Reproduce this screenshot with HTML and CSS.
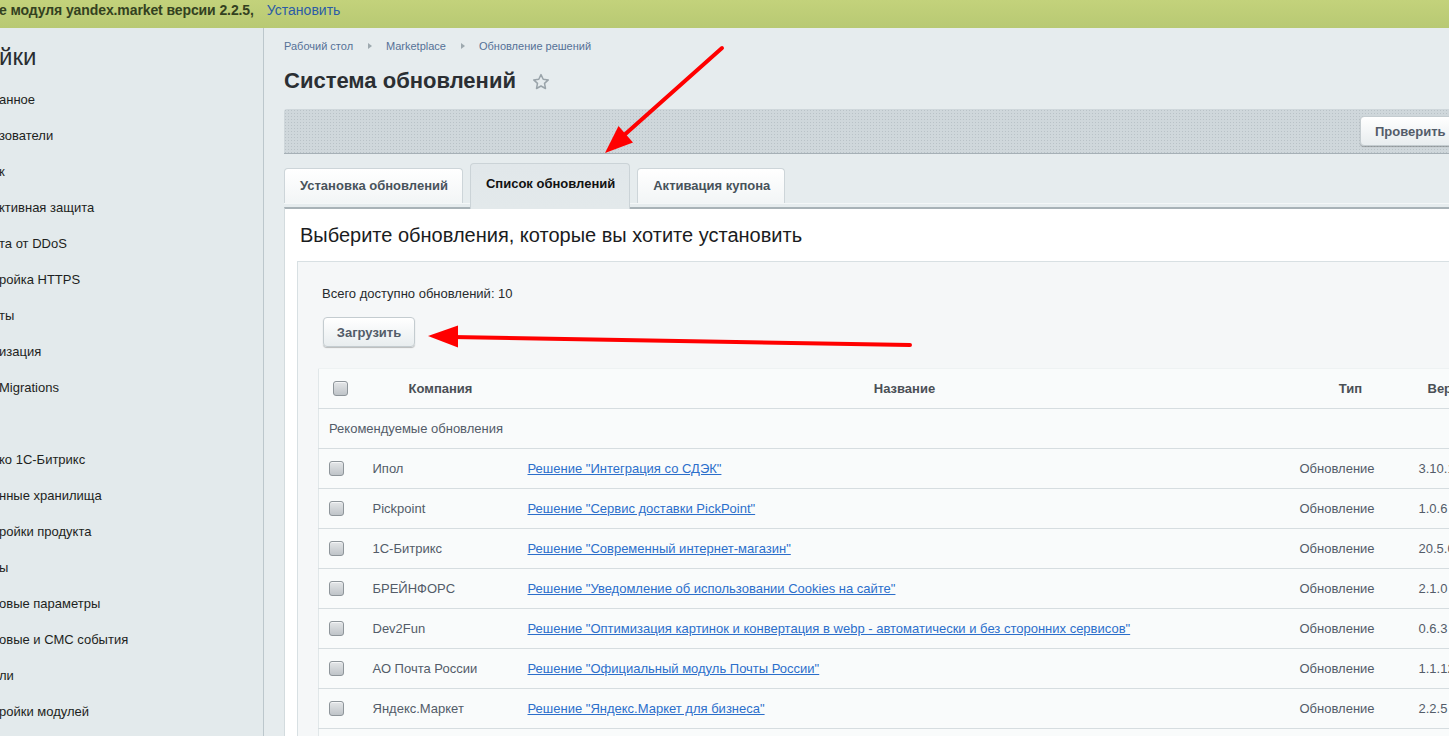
FILE: index.html
```html
<!DOCTYPE html>
<html lang="ru">
<head>
<meta charset="utf-8">
<title>Система обновлений</title>
<link rel="stylesheet" href="styles.css">
</head>
<body>
<div class="topbar">
  <span class="topbar-text">е модуля yandex.market версии 2.2.5,</span>
  <a class="topbar-link" href="#">Установить</a>
</div>
<div class="layout">
  <aside class="sidebar">
    <div class="side-title">йки</div>
    <ul class="side-list">
      <li>анное</li>
      <li>зователи</li>
      <li>к</li>
      <li>ктивная защита</li>
      <li>та от DDoS</li>
      <li>ройка HTTPS</li>
      <li>ты</li>
      <li>изация</li>
      <li>Migrations</li>
      <li></li>
      <li>ко 1С-Битрикс</li>
      <li>нные хранилища</li>
      <li>ройки продукта</li>
      <li>ы</li>
      <li>овые параметры</li>
      <li>овые и СМС события</li>
      <li>ли</li>
      <li>ройки модулей</li>
    </ul>
  </aside>
  <main class="main">
    <nav class="crumbs">
      <a href="#">Рабочий стол</a><span class="crumb-sep"></span>
      <a href="#">Marketplace</a><span class="crumb-sep"></span>
      <a href="#">Обновление решений</a>
    </nav>
    <h1 class="page-title">Система обновлений
      <svg class="star" width="18" height="18" viewBox="0 0 18 18"><path d="M9 1.6l2.2 4.7 5.1.6-3.8 3.5 1 5.1L9 13l-4.5 2.5 1-5.1L1.7 6.9l5.1-.6z" fill="none" stroke="#9aa4aa" stroke-width="1.5" stroke-linejoin="round"/></svg>
    </h1>
    <div class="toolbar">
      <button class="btn btn-check">Проверить</button>
    </div>
    <div class="tabs">
      <div class="tab">Установка обновлений</div>
      <div class="tab tab-active">Список обновлений</div>
      <div class="tab">Активация купона</div>
    </div>
    <section class="panel">
      <h2 class="panel-title">Выберите обновления, которые вы хотите установить</h2>
      <div class="inner">
        <div class="total">Всего доступно обновлений: 10</div>
        <button class="btn btn-load">Загрузить</button>
        <table class="grid">
          <colgroup>
            <col class="c-check"><col class="c-company"><col class="c-name"><col class="c-type"><col class="c-ver"><col class="c-rest">
          </colgroup>
          <thead>
            <tr>
              <th class="th-check"><span class="cb"></span></th>
              <th>Компания</th>
              <th>Название</th>
              <th>Тип</th>
              <th class="th-left">Версия</th>
              <th></th>
            </tr>
          </thead>
          <tbody>
            <tr class="group"><td colspan="6">Рекомендуемые обновления</td></tr>
            <tr><td><span class="cb"></span></td><td>Ипол</td><td><a href="#">Решение "Интеграция со СДЭК"</a></td><td>Обновление</td><td>3.10.1</td><td></td></tr>
            <tr><td><span class="cb"></span></td><td>Pickpoint</td><td><a href="#">Решение "Сервис доставки PickPoint"</a></td><td>Обновление</td><td>1.0.6</td><td></td></tr>
            <tr><td><span class="cb"></span></td><td>1С-Битрикс</td><td><a href="#">Решение "Современный интернет-магазин"</a></td><td>Обновление</td><td>20.5.0</td><td></td></tr>
            <tr><td><span class="cb"></span></td><td>БРЕЙНФОРС</td><td><a href="#">Решение "Уведомление об использовании Cookies на сайте"</a></td><td>Обновление</td><td>2.1.0</td><td></td></tr>
            <tr><td><span class="cb"></span></td><td>Dev2Fun</td><td><a href="#">Решение "Оптимизация картинок и конвертация в webp - автоматически и без сторонних сервисов"</a></td><td>Обновление</td><td>0.6.3</td><td></td></tr>
            <tr><td><span class="cb"></span></td><td>АО Почта России</td><td><a href="#">Решение "Официальный модуль Почты России"</a></td><td>Обновление</td><td>1.1.12</td><td></td></tr>
            <tr><td><span class="cb"></span></td><td>Яндекс.Маркет</td><td><a href="#">Решение "Яндекс.Маркет для бизнеса"</a></td><td>Обновление</td><td>2.2.5</td><td></td></tr>
            <tr><td><span class="cb"></span></td><td>Яндекс.Маркет</td><td><a href="#">Решение "Яндекс.Маркет"</a></td><td>Обновление</td><td>2.2.5</td><td></td></tr>
          </tbody>
        </table>
      </div>
    </section>
  </main>
</div>
<svg class="annot" width="1449" height="736" viewBox="0 0 1449 736">
  <line x1="722" y1="48" x2="622" y2="137" stroke="#ff0000" stroke-width="4" stroke-linecap="round"/>
  <polygon points="605,153 618.5,126 633,142.5" fill="#ff0000"/>
  <line x1="910" y1="345" x2="452" y2="337" stroke="#ff0000" stroke-width="4" stroke-linecap="round"/>
  <polygon points="428,336 458,325.5 458,347.5" fill="#ff0000"/>
</svg>
</body>
</html>
```

FILE: styles.css
```css
html, body {
  margin: 0;
  padding: 0;
  overflow: hidden;
  width: 1449px;
  height: 736px;
}
body {
  font-family: "Liberation Sans", Arial, sans-serif;
  font-size: 13px;
  color: #1f2326;
  background: #e5ebed;
  position: relative;
}
a { color: inherit; }

.topbar {
  height: 28px;
  box-sizing: border-box;
  background: linear-gradient(#c3d27b, #b8c973);
  display: flex;
  align-items: flex-start;
  white-space: nowrap;
  line-height: 20px;
  font-size: 14px;
}
.topbar-text {
  font-weight: bold;
  color: #33411f;
  margin-left: -1px;
  letter-spacing: -0.1px;
}
.topbar-link {
  color: #2b5ca6;
  text-decoration: none;
  margin-left: 13px;
}

.layout {
  display: flex;
  width: 1580px;
  height: 708px;
}
.sidebar {
  width: 263px;
  flex: none;
  border-right: 1px solid #bcc7cc;
  background: #e3eaec;
  padding-top: 15px;
  overflow: hidden;
  white-space: nowrap;
}
.side-title {
  font-size: 24px;
  line-height: 28px;
  color: #2a2d30;
  margin: 0 0 11px -1px;
}
.side-list {
  list-style: none;
  margin: 0;
  padding: 0;
}
.side-list li {
  height: 36px;
  line-height: 36px;
  font-size: 13px;
  color: #1d1f21;
  margin-left: -1px;
}

.main {
  flex: 1;
  padding: 10px 0 0 20px;
  min-width: 0;
  background: #e6ecee;
}
.crumbs {
  font-size: 11px;
  line-height: 16px;
  display: flex;
  align-items: center;
  white-space: nowrap;
}
.crumbs a {
  color: #557197;
  text-decoration: none;
}
.crumb-sep {
  width: 0;
  height: 0;
  border-left: 4px solid #9ea9af;
  border-top: 3px solid transparent;
  border-bottom: 3px solid transparent;
  margin: 0 14px 0 15px;
}
.page-title {
  font-size: 22px;
  line-height: 26px;
  font-weight: bold;
  color: #2b2f33;
  margin: 14px 0 0 0;
  display: flex;
  align-items: center;
}
.star {
  margin-left: 16px;
  margin-top: 2px;
}

.toolbar {
  margin-top: 15px;
  height: 44px;
  border-bottom: 1px solid #a6b0b6;
  border-radius: 3px 0 0 0;
  background-color: #cfd7db;
  background-image: radial-gradient(circle, #b9c2c7 0.7px, transparent 0.9px);
  background-size: 3px 3px;
  display: flex;
  align-items: center;
  padding-left: 1076px;
}
.btn {
  font-family: "Liberation Sans", Arial, sans-serif;
  font-weight: bold;
  font-size: 13px;
  color: #535c69;
  border: 1px solid #c4ccd0;
  border-radius: 4px;
  background: linear-gradient(#ffffff, #e8edef);
  box-shadow: 0 1px 1px rgba(0,0,0,0.25), inset 0 1px 0 #fff;
  cursor: pointer;
}
.btn-check {
  height: 30px;
  padding: 0 14px;
  white-space: nowrap;
}

.tabs {
  display: flex;
  align-items: flex-end;
  gap: 7px;
  margin-top: 10px;
  padding-left: 0;
  height: 39px;
  border-bottom: 1px solid #f4f7f8;
  position: relative;
  z-index: 1;
}
.tab {
  height: 34px;
  line-height: 34px;
  padding: 0 14px 0 15px;
  font-weight: bold;
  font-size: 13px;
  color: #48535b;
  background: linear-gradient(#ffffff, #f2f5f6);
  border: 1px solid #cdd5d9;
  border-bottom: none;
  border-radius: 4px 4px 0 0;
  white-space: nowrap;
}
.tab-active {
  height: 45px;
  line-height: 40px;
  padding: 0 14px 0 15px;
  color: #111;
  background: linear-gradient(#e1e7ea, #e3e9eb);
  border-color: #cbd3d7;
  margin-bottom: -6px;
  align-self: flex-end;
}

.panel {
  margin-top: 3px;
  border-top: 2px solid #a8b2b7;
  border-left: 1px solid #d3dbde;
  background: #ffffff;
  height: 600px;
  padding: 0 0 0 12px;
}
.panel-title {
  margin: 0;
  padding: 14px 0 14px 3px;
  font-size: 20px;
  line-height: 24px;
  font-weight: normal;
  color: #1a1c1e;
  white-space: nowrap;
}
.inner {
  border-top: 1px solid #d8e0e3;
  border-left: 1px solid #d8e0e3;
  background: #f5f7f8;
  padding: 24px 0 0 20px;
  height: 500px;
}
.total {
  font-size: 13px;
  line-height: 16px;
  color: #262a2d;
  margin-left: 4px;
}
.btn-load {
  display: block;
  margin: 15px 0 0 5px;
  height: 30px;
  width: 92px;
  padding: 0;
}
.grid {
  margin-top: 21px;
  border-collapse: collapse;
  table-layout: fixed;
  width: 1213px;
  background: #f9fbfb;
  border-left: 1px solid #e1e7e9;
  border-top: 1px solid #eef2f3;
}
.c-check { width: 43px; }
.c-company { width: 158px; }
.c-name { width: 770px; }
.c-type { width: 122px; }
.c-ver { width: 100px; }
.c-rest { width: 20px; }
.grid th, .grid td {
  height: 39px;
  padding: 0;
  border-bottom: 1px solid #d6dde0;
  vertical-align: middle;
  white-space: nowrap;
  overflow: hidden;
}
.grid th {
  font-weight: bold;
  font-size: 13px;
  color: #4a4f55;
  text-align: center;
}
.grid th.th-left { text-align: left; padding-left: 16px; }
.grid th.th-check { text-align: left; padding-left: 14px; }
.grid td {
  font-size: 13px;
  color: #535c69;
}
.grid td:nth-child(1) { padding-left: 10px; }
.grid td:nth-child(2) { padding-left: 11px; }
.grid td:nth-child(3) { padding-left: 8px; }
.grid td:nth-child(4) { padding-left: 10px; }
.grid td:nth-child(5) { padding-left: 7px; }
.grid tr.group td { padding-left: 10px; color: #535c69; }
.grid td a { color: #2c6fcb; text-decoration: underline; }
.cb {
  display: block;
  width: 13px;
  height: 13px;
  border: 1px solid #8e959a;
  border-radius: 3px;
  background: linear-gradient(#e4e6e8, #bfc4c8);
  box-shadow: inset 0 1px 0 #f4f5f6;
}

.annot {
  position: absolute;
  left: 0;
  top: 0;
  pointer-events: none;
}
```
